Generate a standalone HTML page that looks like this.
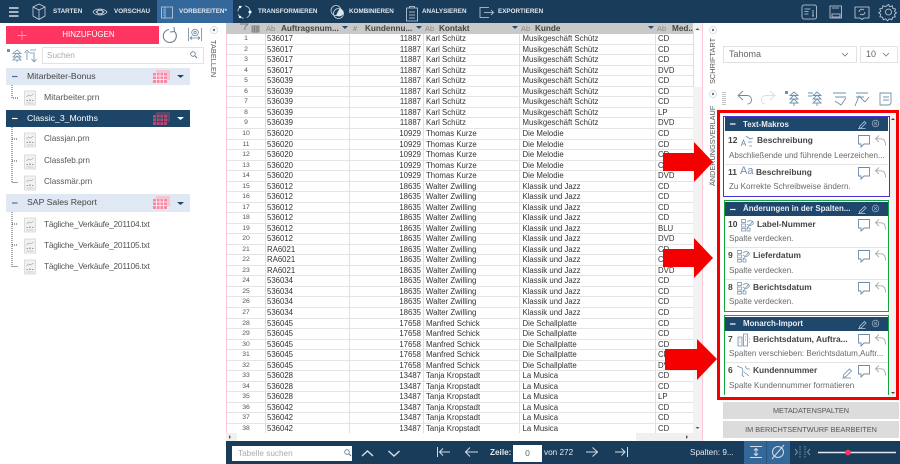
<!DOCTYPE html>
<html lang="de"><head><meta charset="utf-8"><title>Monarch</title>
<style>
*{box-sizing:border-box;margin:0;padding:0}
html,body{width:900px;height:464px;overflow:hidden;background:#fff}
body{position:relative;font-family:"Liberation Sans","DejaVu Sans",sans-serif;color:#555;font-size:9px;filter:blur(.3px)}
.a{position:absolute;white-space:nowrap}
.top{left:0;top:0;width:900px;height:23px;background:#1a3c5b}
.tab{left:157px;top:0;width:76px;height:23px;background:#35689a}
.nav{top:8px;color:#dfe6ed;font-size:6.3px;line-height:8px;font-weight:bold}
.grp{left:6px;width:184px;height:17px;line-height:17px;background:#e0e8f4;color:#444;padding-left:21px;font-size:8.7px}
.grp.d{background:#1d4568;color:#fff}
.f{left:44px;font-size:8.2px;line-height:12px;color:#555}
.f.l{font-size:8.4px;letter-spacing:-.25px}
.hd{left:226px;top:23px;width:467px;height:11px;background:#c9c9c9}
.h{top:24px;line-height:10px;font-size:8.2px;font-weight:bold;color:#444}
.ab{top:24px;line-height:10px;font-size:7.5px;color:#888}
#t{position:absolute;left:227px;top:34.2px;width:466px}
.r{display:block;position:relative;height:10.54px;line-height:10.2px;border-bottom:1px solid #e4e4e4;font-size:7.8px;color:#333;white-space:nowrap}
.r span{position:absolute;top:0;overflow:hidden}
.r span:nth-child(1){left:0;width:38px;text-align:center;font-size:6.8px;color:#555}
.r span:nth-child(2){left:40px}
.r span:nth-child(3){left:122px;width:72px;text-align:right}
.r span:nth-child(4){left:199px}
.r span:nth-child(5){left:295.5px}
.r span:nth-child(6){left:431px}
.v{position:absolute;top:34px;width:1px;height:399px;background:#e0e0e0}
.bot{left:226px;top:441px;width:674px;height:23px;background:#1a3c5b}
.w{color:#e6ebf0;font-size:8.2px;line-height:10px}
.ph{left:743px;color:#e8eef4;font-size:7.9px;font-weight:bold;line-height:10px}
.phb{left:725px;width:163px;height:14px;background:#1f466b}
.n{font-weight:bold;font-size:8.5px;color:#444;line-height:10px}
.t{font-weight:bold;font-size:8.4px;color:#444;line-height:10px}
.ds{left:729px;font-size:8.05px;color:#6a6a6a;line-height:10px}
.ln{left:725px;width:163px;height:1px;background:#e4e4e4}
.btn{left:723px;width:176px;height:17px;background:#dcdcdc;color:#555;font-size:7.3px;text-align:center;line-height:17px}
.vt{transform-origin:0 0;font-size:7.4px;color:#555;line-height:10px}
.box{background:#fff;border:1px solid #e2e2e2}
svg{position:absolute;left:0;top:0}
</style></head>
<body>
<div class="a top"></div><div class="a tab"></div>
<div class="a nav" style="left:53px">STARTEN</div>
<div class="a nav" style="left:114px">VORSCHAU</div>
<div class="a nav" style="left:179px">VORBEREITEN*</div>
<div class="a nav" style="left:258px">TRANSFORMIEREN</div>
<div class="a nav" style="left:349px">KOMBINIEREN</div>
<div class="a nav" style="left:422px">ANALYSIEREN</div>
<div class="a nav" style="left:498px">EXPORTIEREN</div>

<div class="a" style="left:6px;top:26px;width:153px;height:18px;background:#ff3561;color:#fff;font-size:8px;line-height:18px;text-align:center;padding-left:12px">HINZUFÜGEN</div>
<div class="a box" style="left:42px;top:47px;width:162px;height:17px;line-height:15px;padding-left:4px;color:#aaa;font-size:8.2px">Suchen</div>
<div class="a vt" style="left:218px;top:40px;transform:rotate(90deg)">TABELLEN</div>

<div class="a grp" style="top:68px">Mitarbeiter-Bonus</div>
<div class="a f" style="top:91px;font-size:8.7px">Mitarbeiter.prn</div>
<div class="a grp d" style="top:110px">Classic_3_Months</div>
<div class="a f" style="top:133px">Classjan.prn</div>
<div class="a f" style="top:155px">Classfeb.prn</div>
<div class="a f" style="top:176px">Classmär.prn</div>
<div class="a grp" style="top:194px;height:18px">SAP Sales Report</div>
<div class="a f l" style="top:218px">Tägliche_Verkäufe_201104.txt</div>
<div class="a f l" style="top:239px">Tägliche_Verkäufe_201105.txt</div>
<div class="a f l" style="top:260px">Tägliche_Verkäufe_201106.txt</div>

<div class="a" style="left:226px;top:23px;width:1px;height:418px;background:#ffc6d3"></div>
<div class="a" style="left:702px;top:23px;width:1px;height:418px;background:#ffc6d3"></div>

<div id="t">
<div class="r"><span>1</span><span>536017</span><span>11887</span><span>Karl Schütz</span><span>Musikgeschäft Schütz</span><span>CD</span></div>
<div class="r"><span>2</span><span>536017</span><span>11887</span><span>Karl Schütz</span><span>Musikgeschäft Schütz</span><span>CD</span></div>
<div class="r"><span>3</span><span>536017</span><span>11887</span><span>Karl Schütz</span><span>Musikgeschäft Schütz</span><span>CD</span></div>
<div class="r"><span>4</span><span>536017</span><span>11887</span><span>Karl Schütz</span><span>Musikgeschäft Schütz</span><span>DVD</span></div>
<div class="r"><span>5</span><span>536039</span><span>11887</span><span>Karl Schütz</span><span>Musikgeschäft Schütz</span><span>CD</span></div>
<div class="r"><span>6</span><span>536039</span><span>11887</span><span>Karl Schütz</span><span>Musikgeschäft Schütz</span><span>CD</span></div>
<div class="r"><span>7</span><span>536039</span><span>11887</span><span>Karl Schütz</span><span>Musikgeschäft Schütz</span><span>CD</span></div>
<div class="r"><span>8</span><span>536039</span><span>11887</span><span>Karl Schütz</span><span>Musikgeschäft Schütz</span><span>LP</span></div>
<div class="r"><span>9</span><span>536039</span><span>11887</span><span>Karl Schütz</span><span>Musikgeschäft Schütz</span><span>DVD</span></div>
<div class="r"><span>10</span><span>536020</span><span>10929</span><span>Thomas Kurze</span><span>Die Melodie</span><span>CD</span></div>
<div class="r"><span>11</span><span>536020</span><span>10929</span><span>Thomas Kurze</span><span>Die Melodie</span><span>CD</span></div>
<div class="r"><span>12</span><span>536020</span><span>10929</span><span>Thomas Kurze</span><span>Die Melodie</span><span>CD</span></div>
<div class="r"><span>13</span><span>536020</span><span>10929</span><span>Thomas Kurze</span><span>Die Melodie</span><span>CD</span></div>
<div class="r"><span>14</span><span>536020</span><span>10929</span><span>Thomas Kurze</span><span>Die Melodie</span><span>DVD</span></div>
<div class="r"><span>15</span><span>536012</span><span>18635</span><span>Walter Zwilling</span><span>Klassik und Jazz</span><span>CD</span></div>
<div class="r"><span>16</span><span>536012</span><span>18635</span><span>Walter Zwilling</span><span>Klassik und Jazz</span><span>CD</span></div>
<div class="r"><span>17</span><span>536012</span><span>18635</span><span>Walter Zwilling</span><span>Klassik und Jazz</span><span>CD</span></div>
<div class="r"><span>18</span><span>536012</span><span>18635</span><span>Walter Zwilling</span><span>Klassik und Jazz</span><span>CD</span></div>
<div class="r"><span>19</span><span>536012</span><span>18635</span><span>Walter Zwilling</span><span>Klassik und Jazz</span><span>BLU</span></div>
<div class="r"><span>20</span><span>536012</span><span>18635</span><span>Walter Zwilling</span><span>Klassik und Jazz</span><span>DVD</span></div>
<div class="r"><span>21</span><span>RA6021</span><span>18635</span><span>Walter Zwilling</span><span>Klassik und Jazz</span><span>CD</span></div>
<div class="r"><span>22</span><span>RA6021</span><span>18635</span><span>Walter Zwilling</span><span>Klassik und Jazz</span><span>CD</span></div>
<div class="r"><span>23</span><span>RA6021</span><span>18635</span><span>Walter Zwilling</span><span>Klassik und Jazz</span><span>DVD</span></div>
<div class="r"><span>24</span><span>536034</span><span>18635</span><span>Walter Zwilling</span><span>Klassik und Jazz</span><span>CD</span></div>
<div class="r"><span>25</span><span>536034</span><span>18635</span><span>Walter Zwilling</span><span>Klassik und Jazz</span><span>CD</span></div>
<div class="r"><span>26</span><span>536034</span><span>18635</span><span>Walter Zwilling</span><span>Klassik und Jazz</span><span>CD</span></div>
<div class="r"><span>27</span><span>536034</span><span>18635</span><span>Walter Zwilling</span><span>Klassik und Jazz</span><span>CD</span></div>
<div class="r"><span>28</span><span>536045</span><span>17658</span><span>Manfred Schick</span><span>Die Schallplatte</span><span>CD</span></div>
<div class="r"><span>29</span><span>536045</span><span>17658</span><span>Manfred Schick</span><span>Die Schallplatte</span><span>CD</span></div>
<div class="r"><span>30</span><span>536045</span><span>17658</span><span>Manfred Schick</span><span>Die Schallplatte</span><span>CD</span></div>
<div class="r"><span>31</span><span>536045</span><span>17658</span><span>Manfred Schick</span><span>Die Schallplatte</span><span>CD</span></div>
<div class="r"><span>32</span><span>536045</span><span>17658</span><span>Manfred Schick</span><span>Die Schallplatte</span><span>DVD</span></div>
<div class="r"><span>33</span><span>536028</span><span>13487</span><span>Tanja Kropstadt</span><span>La Musica</span><span>CD</span></div>
<div class="r"><span>34</span><span>536028</span><span>13487</span><span>Tanja Kropstadt</span><span>La Musica</span><span>CD</span></div>
<div class="r"><span>35</span><span>536028</span><span>13487</span><span>Tanja Kropstadt</span><span>La Musica</span><span>LP</span></div>
<div class="r"><span>36</span><span>536042</span><span>13487</span><span>Tanja Kropstadt</span><span>La Musica</span><span>CD</span></div>
<div class="r"><span>37</span><span>536042</span><span>13487</span><span>Tanja Kropstadt</span><span>La Musica</span><span>CD</span></div>
<div class="r"><span>38</span><span>536042</span><span>13487</span><span>Tanja Kropstadt</span><span>La Musica</span><span>CD</span></div>
</div>
<div class="v" style="left:265px"></div><div class="v" style="left:349px"></div><div class="v" style="left:423px"></div><div class="v" style="left:519px"></div><div class="v" style="left:655px"></div>

<div class="a hd"></div>
<div class="a ab" style="left:266px">Ab</div><div class="a h" style="left:281px">Auftragsnum...</div>
<div class="a ab" style="left:353px">#</div><div class="a h" style="left:365px">Kundennu...</div>
<div class="a ab" style="left:425px">Ab</div><div class="a h" style="left:439px">Kontakt</div>
<div class="a ab" style="left:521px">Ab</div><div class="a h" style="left:535px">Kunde</div>
<div class="a ab" style="left:657px">Ab</div><div class="a h" style="left:672px">Med...</div>

<div class="a" style="left:693px;top:23px;width:9px;height:410px;background:#f2f2f2"></div>
<div class="a" style="left:693px;top:31px;width:9px;height:56px;background:#fff;border-left:1px solid #ddd"></div>
<div class="a" style="left:226px;top:433px;width:476px;height:8px;background:#f0f0f0"></div>
<div class="a" style="left:237px;top:433px;width:399px;height:8px;background:#fff"></div>

<div class="a bot"></div>
<div class="a" style="left:232px;top:446px;width:120px;height:15px;background:#fff;color:#aaa;font-size:8.2px;line-height:15px;padding-left:6px">Tabelle suchen</div>
<div class="a w" style="left:490px;top:448px;font-weight:bold">Zeile:</div>
<div class="a" style="left:513px;top:445px;width:29px;height:17px;background:#fff;color:#666;font-size:8.5px;line-height:17px;text-align:center">0</div>
<div class="a w" style="left:544px;top:448px">von 272</div>
<div class="a w" style="left:690px;top:448px">Spalten: 9...</div>
<div class="a" style="left:744px;top:441px;width:46px;height:23px;background:#336898"></div>
<div class="a" style="left:766px;top:441px;width:1px;height:23px;background:#28557f"></div>

<div class="a vt" style="left:708px;top:84px;transform:rotate(-90deg)">SCHRIFTART</div>
<div class="a vt" style="left:708px;top:186px;transform:rotate(-90deg);font-size:7.3px">ÄNDERUNGSVERLAUF</div>
<div class="a box" style="left:723px;top:46px;width:134px;height:17px;color:#666;font-size:9px;line-height:15px;padding-left:5px">Tahoma</div>
<div class="a box" style="left:860px;top:46px;width:38px;height:17px;color:#666;font-size:9px;line-height:15px;padding-left:5px">10</div>

<div class="a" style="left:890px;top:114px;width:6px;height:283px;background:#f2f2f2"></div>
<div class="a" style="left:723px;top:116px;width:167px;height:81px;border:1.5px solid #4a2fd6"></div>
<div class="a" style="left:724px;top:200px;width:165px;height:112px;border:1.5px solid #10a83c"></div>
<div class="a" style="left:724px;top:315px;width:165px;height:80px;border:1.5px solid #10a83c;border-bottom:0"></div>

<div class="a phb" style="top:117px"></div><div class="a phb" style="top:202px"></div><div class="a phb" style="top:317px"></div>
<div class="a ph" style="top:120px">Text-Makros</div>
<div class="a ph" style="top:204px">Änderungen in der Spalten...</div>
<div class="a ph" style="top:319px">Monarch-Import</div>

<div class="a n" style="left:728px;top:135px">12</div><div class="a t" style="left:757px;top:135px">Beschreibung</div>
<div class="a ds" style="top:151px">Abschließende und führende Leerzeichen...</div><div class="a ln" style="top:164px"></div>
<div class="a n" style="left:728px;top:167px">11</div><div class="a" style="left:740px;top:164px;font-size:11px;line-height:14px;color:#6f8fb0">Aa</div><div class="a t" style="left:756px;top:167px">Beschreibung</div>
<div class="a ds" style="top:182px">Zu Korrekte Schreibweise ändern.</div>

<div class="a n" style="left:728px;top:219px">10</div><div class="a t" style="left:757px;top:219px">Label-Nummer</div>
<div class="a ds" style="top:234px">Spalte verdecken.</div><div class="a ln" style="top:247px"></div>
<div class="a n" style="left:728px;top:250px">9</div><div class="a t" style="left:753px;top:250px">Lieferdatum</div>
<div class="a ds" style="top:266px">Spalte verdecken.</div><div class="a ln" style="top:279px"></div>
<div class="a n" style="left:728px;top:282px">8</div><div class="a t" style="left:753px;top:282px">Berichtsdatum</div>
<div class="a ds" style="top:297px">Spalte verdecken.</div>

<div class="a n" style="left:728px;top:334px">7</div><div class="a t" style="left:753px;top:334px">Berichtsdatum, Auftra...</div>
<div class="a ds" style="top:349px">Spalten verschieben: Berichtsdatum,Auftr...</div><div class="a ln" style="top:362px"></div>
<div class="a n" style="left:728px;top:365px">6</div><div class="a t" style="left:753px;top:365px">Kundennummer</div>
<div class="a ds" style="top:381px">Spalte Kundennummer formatieren</div>

<div class="a btn" style="top:402px">METADATENSPALTEN</div>
<div class="a btn" style="top:421px">IM BERICHTSENTWURF BEARBEITEN</div>

<svg width="900" height="464" viewBox="0 0 900 464" fill="none">
<defs>
<symbol id="file" overflow="visible"><path d="M0 0h11v14H0z" fill="#f2f2f2" stroke="#d4d4d4" stroke-width=".8"/><path d="M2 6l2-2 2 1 3-2" stroke="#aaa" stroke-width=".7"/><path d="M2 9h1.500v1H2zM4.700 8.500h1.500v1.500H4.700zM7.500 9h1.500v1H7.500z" fill="#999"/><path d="M2 12h7" stroke="#ccc"/></symbol>
<symbol id="tbl" overflow="visible"><path d="M3 0h14v10H3z" fill="#f7c3d0"/><path d="M0 3h14v10H0z" fill="#f58aa5"/><path d="M0 6h14M0 9.500h14M3.500 3v10M7 3v10M10.500 3v10" stroke="#fff" stroke-width=".7"/></symbol>
<symbol id="tbld" overflow="visible"><path d="M3 0h14v10H3z" fill="#55496e"/><path d="M0 3h14v10H0z" fill="#b14a72"/><path d="M0 6h14M0 9.500h14M3.500 3v10M7 3v10M10.500 3v10" stroke="#1d4568" stroke-width=".7"/></symbol>
<symbol id="cu" overflow="visible"><path d="M.5.500h11v8.500H6l-3 3V9H.5z" stroke="#6d8cab" stroke-width=".9"/><path d="M21 .5l-3.500 3.300 3.500 3.300M17.500 3.800h5.500c3 0 4.500 2.300 4.500 6.700" stroke="#a9a9a9" stroke-width=".9"/></symbol>
<symbol id="hid" overflow="visible"><path d="M.5.500h4v3h-4zM.5 5h4v3h-4zM.5 9.500h4v2.500h-4z" stroke="#6d8cab" stroke-width=".7"/><path d="M6 3c2-2 5-2 6.500 1-1.500 3-4.500 3-6.500 1M6 9l6-7" stroke="#6d8cab" stroke-width=".7"/><path d="M6 9h3v3H6z" stroke="#6d8cab" stroke-width=".7"/></symbol>
<symbol id="ed" overflow="visible"><path d="M0 8.500h7.500M1.500 6.500L6.500 1.500l1.500 1.500-5 5H1.500z" stroke="#b9c8d8" stroke-width=".8"/></symbol>
<symbol id="cx" overflow="visible"><circle cx="3.500" cy="3.500" r="3.300" stroke="#8ea6bd" stroke-width=".8"/><path d="M2 2l3 3M5 2L2 5" stroke="#8ea6bd" stroke-width=".8"/></symbol>
<symbol id="minus" overflow="visible"><path d="M0 0h5.500" stroke="#fff" stroke-width="1.200"/></symbol>
</defs>

<!-- top bar -->
<path d="M9 8h9.500M9 12h9.500M9 16h9.500" stroke="#fff" stroke-width="1.300"/>
<g stroke="#c9d4de" stroke-width=".8">
<path d="M39 4l6 3v9l-6 3.500L33 16V7zM33 7l6 3 6-3M39 10v9.500"/>
<path d="M93 12c2-4 11-4 14 0-3 4-12 4-14 0z"/><circle cx="100" cy="12" r="2.800"/><path d="M96 12c1-2 7-2 8 0M96 12c1 2 7 2 8 0"/>
<path d="M161.500 7h11v11h-11zM165 7v11M163 10h1M163 12.500h1M163 15h1"/>
<circle cx="244" cy="12" r="6.200" stroke-dasharray="7 3"/>
<circle cx="336" cy="10.500" r="5"/><circle cx="338.500" cy="13.500" r="5"/>
<path d="M406.500 8h11v13h-11zM409.500 8V6.500h5V8M409 12h6M409 15h6M409 18h6"/>
<path d="M489 7.500h-9v10h9M484 12.500h9.500M491 10l2.500 2.500-2.500 2.500"/>
<rect x="802" y="5" width="14.500" height="14" rx="2"/><path d="M804.500 9h6M804.500 11.500h4M804.500 14h4M813 10v6M812 16h2"/>
<path d="M830 6h11.500v12H830zM832 14h8v3h-8zM832 8h7"/>
<path d="M855 7h14v11h-5l-2 1.500-2-1.500h-5zM859 12a3 3 0 015-2M865 12a3 3 0 01-5 2"/>
<circle cx="888.500" cy="12" r="3"/><path d="M888.500 4.500l1.400 2.300 2.500-1 .5 2.700 2.600.5-1 2.500 2 1.300-2 1.600.8 2.500-2.700.3-.8 2.600-2.500-1-1.800 2-1.800-2-2.400 1-.7-2.600-2.700-.4.800-2.500-2-1.500 2-1.400-1-2.500 2.700-.5.500-2.700 2.500 1z"/>
</g>
<path d="M336 15.500a5 5 0 007.400-2 5 5 0 00-4-4.800z" fill="#dfe6ed"/>
<circle cx="250" cy="12" r="1.500" fill="#fff"/><circle cx="240" cy="7" r="1.200" fill="#fff"/><circle cx="240" cy="17" r="1.200" fill="#fff"/>

<!-- left toolbar -->
<path d="M22 31v9M17.500 35.500h9" stroke="#ff9ab1" stroke-width=".9"/>
<path d="M169 29.500a6.500 6.500 0 106 2.500M174 27l.5 4.500-4.500.5" stroke="#6b7f92" stroke-width="1.100"/>
<g stroke="#6f879e" stroke-width=".8"><path d="M188.500 28v13M201.500 28v13M190 38h10M190 38l2-1.500M190 38l2 1.500M200 38l-2-1.500M200 38l-2 1.500"/><circle cx="195" cy="32.500" r="3.300"/><circle cx="195" cy="32.500" r="1.200"/></g>
<circle cx="214" cy="30" r="3.500" stroke="#c9d2da" stroke-width=".7"/><circle cx="214" cy="30" r="1.200" fill="#5c7893"/>
<g stroke="#6f90ae" stroke-width=".8"><path d="M17 50l-4 3.500h8zM17 53l-4 4h8zM17 56l-4 4h8zM17 60v2"/><path d="M27 52v8M27 50l-2.500 3M27 50l2.500 3M34 52v9M34 62l-2.500-3M34 62l2.500-3M30 50h6M30 53h3"/></g>
<path d="M7 49h3v3H7z" fill="#6f90ae"/>
<circle cx="193" cy="54" r="2.300" stroke="#59728b" stroke-width=".8"/><path d="M195 56l2 2" stroke="#59728b" stroke-width=".9"/>

<!-- groups -->
<path d="M12 76.500h5.500" stroke="#4d6f8f" stroke-width="1.200"/><path d="M12 118.500h5.500" stroke="#fff" stroke-width="1.200"/><path d="M12 203h5.500" stroke="#4d6f8f" stroke-width="1.200"/>
<use href="#tbl" x="153" y="70" width="17" height="13"/><use href="#tbld" x="153" y="112" width="17" height="13"/><use href="#tbl" x="153" y="196" width="17" height="13"/>
<path d="M177 75h7l-3.500 3z" fill="#1d4568"/><path d="M177 117h7l-3.500 3z" fill="#fff"/><path d="M177 202h7l-3.500 3z" fill="#1d4568"/>
<g stroke="#444" stroke-width=".9" stroke-dasharray="1 1"><path d="M12 85v13h6M12 127v55.500h6M12 139h6M12 161h6M12 212v54.500h6M12 224h6M12 245h6"/></g>
<use href="#file" x="24.500" y="91"/><use href="#file" x="24.500" y="133"/><use href="#file" x="24.500" y="155"/><use href="#file" x="24.500" y="176"/><use href="#file" x="24.500" y="218"/><use href="#file" x="24.500" y="239"/><use href="#file" x="24.500" y="260"/>

<!-- table header icon + carets -->
<path d="M240 24h8l-3 3v3M252 26h7v6h-7zM252 28h7M252 30h7M254.500 26v6M257 26v6" stroke="#666" stroke-width=".7"/>
<path d="M342 26h6l-3 3zM416 26h6l-3 3zM512 26h6l-3 3zM648 26h6l-3 3z" fill="#24476a"/>
<path d="M695.500 30l2-2 2 2z" fill="#555"/><path d="M695.500 427l2 2 2-2z" fill="#555"/>
<path d="M230 437l-2-2v4z" fill="#555" transform="translate(1 0)"/><path d="M686 437l2-2v4z" fill="#555" transform="rotate(180 687 437)"/>

<!-- bottom bar -->
<g stroke="#d5dde5" stroke-width="1"><path d="M362 456l5.500-5 5.500 5M388.500 451l5.500 5 5.500-5" stroke-width="1.400"/><path d="M437.500 447v10M450 452h-10M443 448.500l-3.500 3.500 3.500 3.500M478 452h-12M470 447.500l-4.500 4.500 4.500 4.500M586 452h12M592.500 447.500l5 4.500-5 4.500M615 452h10M621.500 448.500l3.500 3.500-3.500 3.500M627.500 447v10"/>
<path d="M750 446.500h12M750 457.500h12M756 449v6M754 450.500l2-2 2 2M754 453.500l2 2 2-2"/>
<circle cx="778" cy="452" r="5.500"/><path d="M772 459l12-14"/>
<path d="M800 446v12M805 446v12" stroke="#7b93a8" stroke-dasharray="1.500 1"/><path d="M795 449l2.500 3-2.500 3M810 449l-2.500 3 2.500 3" stroke="#7b93a8"/></g>
<path d="M818 452.500h78" stroke="#e3e8ed" stroke-width="1.600"/><circle cx="848" cy="452.500" r="2.800" fill="#ff3561"/>
<circle cx="347" cy="452" r="2.300" stroke="#59728b" stroke-width=".8"/><path d="M349 454l2 2" stroke="#59728b"/>

<!-- right side -->
<circle cx="713" cy="30" r="3.500" stroke="#c9d2da" stroke-width=".7"/><circle cx="713" cy="30" r="1.200" fill="#5c7893"/>
<circle cx="713" cy="94" r="3.500" stroke="#c9d2da" stroke-width=".7"/><circle cx="713" cy="94" r="1.200" fill="#5c7893"/>
<path d="M842 53l3 3 3-3M883 53l3 3 3-3" stroke="#777" stroke-width=".8"/>
<path d="M723 92v13M725 92v13" stroke="#888" stroke-dasharray="1 1"/>
<g stroke-width=".9">
<path d="M743 91l-5 4.500 5 4.500M738 95.500h9c3 0 4.500 2 4.500 4.500s-2 4-4 4" stroke="#6f879e"/>
<path d="M770 91l5 4.500-5 4.500M775 95.500h-9c-3 0-4.500 2-4.500 4.500s2 4 4 4" stroke="#d8dee4"/>
<g stroke="#6f90ae"><path d="M794 92l-4 3.500h8zM794 95l-4 4h8zM794 99l-4 4h8zM794 103v3"/><path d="M817 92l-4 3.500h8zM817 95l-4 4h8zM817 99l-4 4h8zM817 103v3M808 93h5M808 96h4"/><path d="M833 93h13M835 97h11M835 101l6 4 5-7"/><path d="M856 93h12M856 97h8M855 106l4-10 6 6M865 102l4-5"/><path d="M880 93h11v9c0 2-1 3-3 3h-8zM883 97h6M883 100h6"/></g>
</g>
<rect x="785" y="91" width="3" height="3" fill="#6f90ae"/>

<!-- panels -->
<use href="#minus" x="730" y="124"/><use href="#minus" x="730" y="209.500"/><use href="#minus" x="730" y="324"/>
<use href="#ed" x="858" y="120"/><use href="#cx" x="872" y="120"/>
<use href="#ed" x="858" y="205"/><use href="#cx" x="872" y="205"/>
<use href="#ed" x="858" y="320"/><use href="#cx" x="872" y="320"/>
<g stroke="#6d8cab" stroke-width=".8"><path d="M741 146l2.500-6 2.500 6M742 144h3M746 136l4 3 3-1M748 142h4M749 146h3"/></g>
<use href="#cu" x="858" y="135"/><use href="#cu" x="858" y="167"/><use href="#cu" x="858" y="219"/><use href="#cu" x="858" y="250"/><use href="#cu" x="858" y="282"/><use href="#cu" x="858" y="334"/><use href="#cu" x="858" y="365"/>
<use href="#hid" x="741" y="219"/><use href="#hid" x="737" y="250"/><use href="#hid" x="737" y="282"/>
<g stroke="#6d8cab" stroke-width=".8"><path d="M738 337h4v9h-4zM743.500 334h4v12h-4zM739.500 339h1M739.500 342h1M745 337h1M745 340h1M749 339h1M749 342h1"/><path d="M737 366l5 2 1 3-1 4 2 2M745 366l2 3 3 0M744 372l5 4"/></g>
<path d="M842 378h9M843.500 375l6-6 2 2-6 6h-2z" stroke="#6f879e" stroke-width=".8"/>
<path d="M891 120l2-2 2 2z" fill="#444"/><path d="M891 392l2 2 2-2z" fill="#444"/>

<!-- red annotations -->
<rect x="718.500" y="111.500" width="179" height="287" stroke="#f40000" stroke-width="3"/>
<path d="M663 153h31v-11l19 20-19 20v-11h-31zM663 249h31v-11l19 20-19 20v-11h-31zM665 349h32v-10l20 20-20 21v-10h-32z" fill="#f40000"/>
</svg>
</body></html>
